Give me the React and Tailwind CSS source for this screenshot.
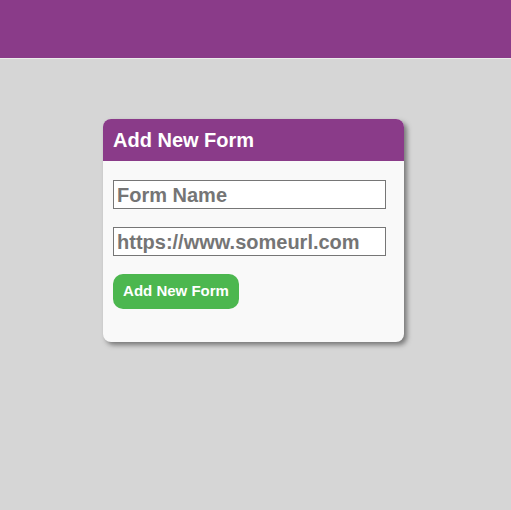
export default function App() {
  return (
    <div className="min-h-[510px] bg-[#d6d6d6] font-['Liberation_Sans',Arial,sans-serif]">
      <div className="h-[58px] bg-[#8a3b89]" />
      <div className="h-px bg-[#ececec]" />
      <div className="pt-[60px] pl-[103px]">
        <div className="w-[301px] h-[223px] rounded-[8px] bg-[#f9f9f9] shadow-[3px_3px_5px_#777] overflow-hidden">
          <div className="h-[42px] bg-[#8a3b89] px-[10px] flex items-center">
            <h2 className="text-white font-bold text-[20px]">Add New Form</h2>
          </div>
          <div className="px-[10px] pt-[19px] flex flex-col items-start">
            <input
              className="w-[273px] h-[29px] border border-[#767676] bg-white px-[3px] text-[20px] font-bold text-[#333] placeholder:text-[#757575] outline-none"
              placeholder="Form Name"
            />
            <input
              className="mt-[18px] w-[273px] h-[29px] border border-[#767676] bg-white px-[3px] text-[20px] font-bold text-[#333] placeholder:text-[#757575] outline-none"
              placeholder="https://www.someurl.com"
            />
            <button className="mt-[18px] w-[126px] h-[35px] rounded-[10px] bg-[#4cb74f] text-white font-bold text-[15px]">
              Add New Form
            </button>
          </div>
        </div>
      </div>
    </div>
  );
}
